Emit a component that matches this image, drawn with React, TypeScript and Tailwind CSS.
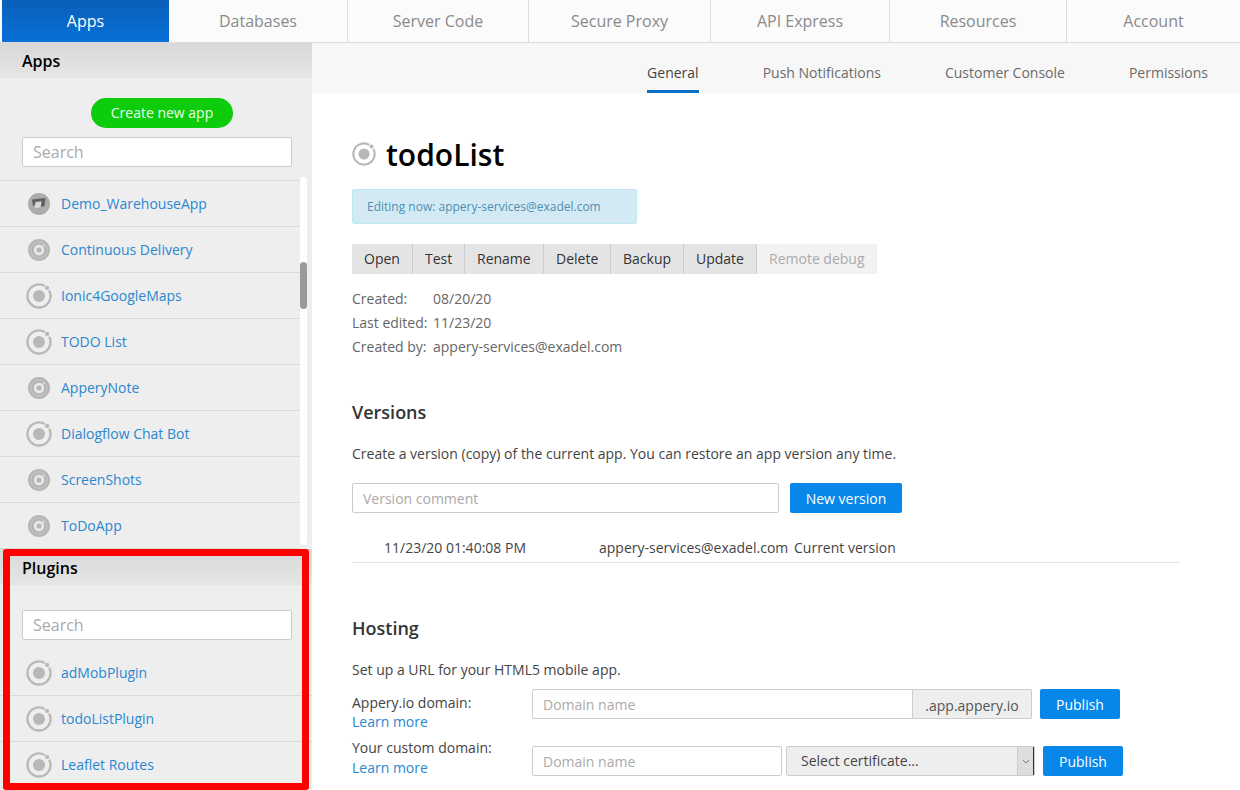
const topTabs = [
  { label: 'Apps', width: 'w-[167px]', active: true },
  { label: 'Databases', width: 'w-[179px]' },
  { label: 'Server Code', width: 'w-[181px]' },
  { label: 'Secure Proxy', width: 'w-[182px]' },
  { label: 'API Express', width: 'w-[179px]' },
  { label: 'Resources', width: 'w-[177px]' },
  { label: 'Account', width: 'flex-1' },
]

const apps = [
  'Demo_WarehouseApp',
  'Continuous Delivery',
  'Ionic4GoogleMaps',
  'TODO List',
  'ApperyNote',
  'Dialogflow Chat Bot',
  'ScreenShots',
  'ToDoApp',
]

const filledIcons = ['Continuous Delivery', 'ApperyNote', 'ScreenShots', 'ToDoApp']

const actions = [
  { label: 'Open', width: 'w-[61px]' },
  { label: 'Test', width: 'w-[52px]' },
  { label: 'Rename', width: 'w-[79px]' },
  { label: 'Delete', width: 'w-[67px]' },
  { label: 'Backup', width: 'w-[73px]' },
  { label: 'Update', width: 'w-[73px]' },
]

function IonicIcon({ size = 26 }: { size?: number }) {
  return (
    <svg width={size} height={size} viewBox="0 0 26 26" fill="none">
      <path d="M18.75 3.04A11.5 11.5 0 1 0 23.15 7.6" stroke="#b8b8b8" strokeWidth="2.3" />
      <circle cx="13" cy="13" r="6" fill="#b8b8b8" />
      <circle cx="21.1" cy="4.9" r="2.1" fill="#b8b8b8" />
    </svg>
  )
}

function FilledIcon() {
  return (
    <svg width="24" height="24" viewBox="0 0 24 24" fill="none">
      <circle cx="12" cy="12" r="11" fill="#b6b6b6" />
      <circle cx="12" cy="12" r="8.2" stroke="#c8c8c8" />
      <circle cx="12" cy="12" r="5.2" fill="#e9e9e9" />
      <circle cx="12" cy="12" r="2.6" fill="#b6b6b6" />
      <circle cx="16.6" cy="7.4" r="1.2" fill="#d8d8d8" />
    </svg>
  )
}

function DemoIcon() {
  return (
    <svg width="24" height="24" viewBox="0 0 24 24" fill="none">
      <circle cx="12" cy="12" r="11" fill="#acacac" />
      <path d="M5 7.500l13.500-1.500-1 8-5.500 1.500.5-5-6.500 3.500z" fill="#606060" />
      <path d="M8.500 10l6-.8-.8 6.300-6 .8z" fill="#d8d8d8" />
    </svg>
  )
}

function SearchBox() {
  return (
    <div className="ml-[22px] mr-[20px] h-[30px] rounded-[2px] border border-[#cccccc] bg-white pl-[10px] text-[16px] leading-[28px] text-[#aaaaaa]">
      Search
    </div>
  )
}

function Row({ name }: { name: string }) {
  return (
    <div className="flex h-[46px] items-center border-b border-[#d9d9d9] text-[14px] text-[#2a87d0]">
      <div className="flex w-[61px] justify-center pl-[17px]">
        {name === 'Demo_WarehouseApp' ? <DemoIcon /> : filledIcons.includes(name) ? <FilledIcon /> : <IonicIcon />}
      </div>
      <span>{name}</span>
    </div>
  )
}

function Field({ placeholder, className }: { placeholder: string; className: string }) {
  return (
    <div className={`h-[30px] border border-[#cccccc] bg-white pl-[10px] text-[14px] leading-[29px] text-[#aaaaaa] ${className}`}>
      {placeholder}
    </div>
  )
}

function BlueButton({ label, className }: { label: string; className: string }) {
  return (
    <div className={`h-[30px] rounded-[2px] bg-[#0787ea] text-center text-[14px] leading-[31px] text-white ${className}`}>
      {label}
    </div>
  )
}

export default function App() {
  return (
    <div className="relative h-[790px] w-[1240px] overflow-hidden bg-white font-['Open_Sans',sans-serif]">
      {/* top nav */}
      <div className="flex h-[43px] border-b border-[#dddddd] bg-[#fbfbfb] pl-[2px]">
        {topTabs.map((t) => (
          <div
            key={t.label}
            className={`${t.width} h-[42px] text-center text-[16px] leading-[42px] ${
              t.active
                ? 'bg-gradient-to-b from-[#0a5fb8] to-[#0870d8] text-white'
                : 'border-r border-[#dddddd] text-[#8a8a8a] last:border-r-0'
            }`}
          >
            {t.label}
          </div>
        ))}
      </div>

      <div className="flex h-[747px]">
        {/* sidebar */}
        <div className="w-[312px] shrink-0 overflow-hidden bg-[#eeeeee]">
          <div className="h-[35px] bg-gradient-to-b from-[#d8d8d8] to-[#e6e6e6] pl-[22px] text-[16px] font-semibold leading-[36px] text-black">
            Apps
          </div>
          <div className="mt-[20px] flex pl-[91px]">
            <div className="h-[30px] w-[142px] rounded-full bg-[#0ccc0c] text-center text-[14px] leading-[30px] text-[#eaffea]">
              Create new app
            </div>
          </div>
          <div className="mt-[9px]">
            <SearchBox />
          </div>
          <div className="mt-[13px] flex h-[369px]">
            <div className="w-[300px] border-t border-[#d9d9d9]">
              {apps.map((a) => (
                <Row key={a} name={a} />
              ))}
            </div>
            <div className="mt-[-3px] h-[368px] w-[7px] rounded-full bg-white pt-[85px]">
              <div className="h-[47px] rounded-full bg-[#9a9a9a]" />
            </div>
          </div>
          <div className="h-[36px] bg-gradient-to-b from-[#d8d8d8] to-[#e6e6e6] pl-[22px] text-[16px] font-semibold leading-[38px] text-black">
            Plugins
          </div>
          <div className="mt-[25px]">
            <SearchBox />
          </div>
          <div className="mt-[10px]">
            {['adMobPlugin', 'todoListPlugin', 'Leaflet Routes'].map((p) => (
              <Row key={p} name={p} />
            ))}
          </div>
        </div>

        {/* main */}
        <div className="min-w-0 flex-1">
          <div className="flex h-[50px] justify-end gap-[64px] bg-[#f7f7f7] pr-[32px] text-[14px] text-[#6b6b6b]">
            <div className="h-[50px] border-b-[3px] border-[#0b6fc9] pt-[19px] text-[#444444]">General</div>
            <div className="pt-[19px]">Push Notifications</div>
            <div className="pt-[19px]">Customer Console</div>
            <div className="pt-[19px]">Permissions</div>
          </div>

          <div className="pl-[40px] text-[14px] text-[#444444]">
            <div className="mt-[41px] flex h-[40px] items-center gap-[10px]">
              <IonicIcon size={24} />
              <h1 className="text-[30px] font-semibold text-black">todoList</h1>
            </div>

            <div className="mt-[15px] h-[35px] w-[285px] rounded-[2px] border border-[#bce8f1] bg-[#d3eaf5] pl-[14px] text-[12px] leading-[33px] text-[#4f8fb0]">
              Editing now: appery-services@exadel.com
            </div>

            <div className="mt-[20px] flex h-[30px] w-[525px] bg-[#f2f2f2] leading-[30px] text-[#333333]">
              {actions.map((a) => (
                <div key={a.label} className={`${a.width} border-r border-[#cccccc] bg-[#e4e4e4] pl-[12px]`}>
                  {a.label}
                </div>
              ))}
              <div className="pl-[12px] text-[#aaaaaa]">Remote debug</div>
            </div>

            <div className="mt-[13px] grid grid-cols-[81px_1fr] text-[#666666] leading-[24px]">
              <span>Created:</span>
              <span>08/20/20</span>
              <span>Last edited:</span>
              <span>11/23/20</span>
              <span>Created by:</span>
              <span>appery-services@exadel.com</span>
            </div>

            <h2 className="mt-[40px] text-[18px] font-semibold leading-[26px] text-[#333333]">Versions</h2>
            <p className="mt-[19px] leading-[20px] text-[#444444]">
              Create a version (copy) of the current app. You can restore an app version any time.
            </p>

            <div className="mt-[19px] flex gap-[11px]">
              <Field placeholder="Version comment" className="w-[427px] rounded-[2px]" />
              <BlueButton label="New version" className="w-[112px]" />
            </div>

            <div className="mt-[23px] flex h-[27px] w-[828px] border-b border-[#e2e2e2] pl-[32px] pt-[2px] leading-[20px] text-[#444444]">
              <span className="w-[215px]">11/23/20 01:40:08 PM</span>
              <span className="w-[195px]">appery-services@exadel.com</span>
              <span>Current version</span>
            </div>

            <h2 className="mt-[52px] text-[18px] font-semibold leading-[26px] text-[#333333]">Hosting</h2>
            <p className="mt-[19px] leading-[20px] text-[#444444]">Set up a URL for your HTML5 mobile app.</p>

            <div className="mt-[9px] flex">
              <div className="w-[180px] leading-[20px]">
                <div className="mt-[4px]">Appery.io domain:</div>
                <div className="mt-[-1px] text-[#2a87d0]">Learn more</div>
              </div>
              <Field placeholder="Domain name" className="w-[381px] rounded-l-[2px]" />
              <div className="h-[30px] w-[119px] rounded-r-[2px] border border-l-0 border-[#cccccc] bg-[#eeeeee] text-center leading-[32px] text-[#555555]">
                .app.appery.io
              </div>
              <BlueButton label="Publish" className="ml-[8px] w-[80px]" />
            </div>

            <div className="mt-[14px] flex">
              <div className="w-[180px] leading-[20px]">
                <div className="mt-[-8px]">Your custom domain:</div>
                <div className="text-[#2a87d0]">Learn more</div>
              </div>
              <Field placeholder="Domain name" className="w-[250px] rounded-[2px]" />
              <div className="ml-[4px] flex h-[30px] w-[249px] rounded-[2px] border border-[#cccccc] bg-[#eeeeee] text-[#444444]">
                <span className="flex-1 pl-[14px] leading-[28px]">Select certificate...</span>
                <div className="flex w-[17px] items-center justify-center border-r border-l border-r-[#333333] border-l-[#cccccc] bg-[#dddddd]">
                  <svg width="8" height="5" viewBox="0 0 8 5" fill="none">
                    <path d="M1 1l3 3 3-3" stroke="#777777" />
                  </svg>
                </div>
              </div>
              <BlueButton label="Publish" className="ml-[8px] w-[80px]" />
            </div>
          </div>
        </div>
      </div>

      {/* red annotation box */}
      <div className="absolute left-[3px] top-[549px] h-[241px] w-[306px] rounded-[3px] border-[7px] border-[#ff0000]" />
    </div>
  )
}
